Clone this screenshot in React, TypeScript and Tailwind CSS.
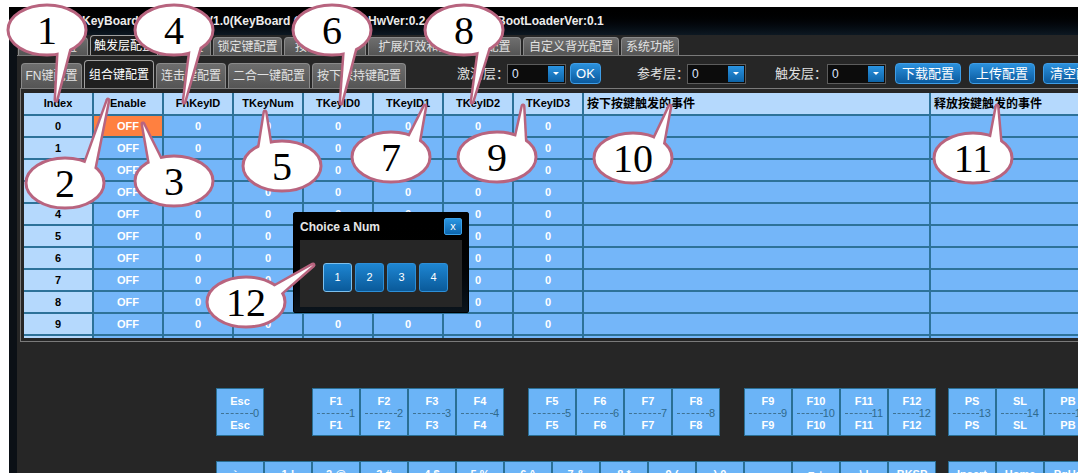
import React from "react";

type Callout = { n: string; cx: number; cy: number; a: number; tx: number; ty: number };

const RX = 39;
const RY = 25;

// a = angle (deg) on the ellipse where the tail leaves it
const callouts: Callout[] = [
  { n: "1", cx: 47, cy: 30, a: 59, tx: 56, ty: 100 },
  { n: "4", cx: 174, cy: 30, a: 50, tx: 184, ty: 102 },
  { n: "6", cx: 332, cy: 30, a: 57, tx: 341, ty: 103 },
  { n: "8", cx: 464, cy: 30, a: 53, tx: 472, ty: 102 },
  { n: "2", cx: 65, cy: 183, a: -44, tx: 108, ty: 100 },
  { n: "3", cx: 174, cy: 181, a: -123, tx: 143, ty: 124 },
  { n: "5", cx: 282, cy: 166, a: -121, tx: 265, ty: 112 },
  { n: "7", cx: 391, cy: 157, a: -48, tx: 425, ty: 106 },
  { n: "9", cx: 497, cy: 157, a: -46, tx: 523, ty: 106 },
  { n: "10", cx: 633, cy: 158, a: -42, tx: 670, ty: 106 },
  { n: "11", cx: 973, cy: 158, a: -48, tx: 997, ty: 106 },
  { n: "12", cx: 246, cy: 302, a: -29, tx: 313, ty: 265 },
];

function tail(c: Callout) {
  const pt = (deg: number) => {
    const r = (deg * Math.PI) / 180;
    return `${c.cx + RX * 0.88 * Math.cos(r)},${c.cy + RY * 0.88 * Math.sin(r)}`;
  };
  return `${pt(c.a - 11)} ${c.tx},${c.ty} ${pt(c.a + 11)}`;
}

const tabs1 = [
  { t: "按键配置", w: "w-[70px]" },
  { t: "触发层配置", w: "w-[68px]", on: true },
  { t: "宏配置", w: "w-[51px]" },
  { t: "锁定键配置", w: "w-[69px]" },
  { t: "按键宏配置", w: "w-[82px]" },
  { t: "扩展灯效和按键灯效配置", w: "w-[153px]" },
  { t: "自定义背光配置", w: "w-[96px]" },
  { t: "系统功能", w: "w-[58px]" },
];

const tabs2 = [
  { t: "FN键配置", w: "w-[61px]" },
  { t: "组合键配置", w: "w-[70px]", on: true },
  { t: "连击键配置", w: "w-[70px]" },
  { t: "二合一键配置", w: "w-[82px]" },
  { t: "按下保持键配置", w: "w-[94px]" },
];

const heads = ["Index", "Enable", "FnKeyID", "TKeyNum", "TKeyID0", "TKeyID1", "TKeyID2", "TKeyID3"];

function Combo() {
  return (
    <div className="flex h-[20px] w-[59px] shrink-0 items-center border border-[#5c5c5c] bg-[#0c0c0c]">
      <span className="flex-1 pl-[4px] text-[12px] leading-[12px] text-[#dfe6ff]">0</span>
      <span className="mr-[1px] flex h-[16px] w-[16px] items-center justify-center bg-linear-to-b from-[#2a94e2] to-[#0d64a8]">
        <span className="h-0 w-0 border-x-[3px] border-t-[3px] border-x-transparent border-t-white" />
      </span>
    </div>
  );
}

function BlueBtn({ children, className }: { children: React.ReactNode; className: string }) {
  return (
    <div
      className={`flex h-[21px] shrink-0 items-center justify-center rounded-[4px] border border-[#3f9de6] bg-linear-to-b from-[#2b91dd] to-[#0a5a9e] text-[13px] text-white ${className}`}
    >
      {children}
    </div>
  );
}

function Key({ label, n }: { label: string; n: number }) {
  return (
    <div className="flex h-[48px] w-[48px] shrink-0 flex-col border border-[#2a6f94] bg-[#6bb4f7] pt-[5px]">
      <div className="text-center text-[11px] font-bold leading-[14px] text-white">{label}</div>
      <div className="flex h-[11px] items-center pl-[4px] pr-[4px]">
        <div className="flex-1 border-t border-dashed border-[#3f7293]" />
        <span className="text-[11px] leading-[11px] text-[#2f6a8e]">{n}</span>
      </div>
      <div className="text-center text-[11px] font-bold leading-[13px] text-white">{label}</div>
    </div>
  );
}

const row2 = ["` ~", "1 !", "2 @", "3 #", "4 $", "5 %", "6 ^", "7 &", "8 *", "9 (", ") 0", "- _", "= +", "\\ |", "BKSP"];

export default function App() {
  return (
    <div className="relative h-[473px] w-[1078px] overflow-hidden bg-white pl-[9px] pt-[7px] font-['Liberation_Sans','Noto_Sans_CJK_SC',sans-serif]">
      <div className="flex h-[466px] w-[1069px] flex-col bg-[#0b1016]">
        {/* title bar */}
        <div className="flex h-[28px] shrink-0 items-center whitespace-nowrap bg-linear-to-b from-[#000000] to-[#0d1822] pl-[73px] text-[12px] font-bold text-[#ececec]">
          <span className="w-[123px] overflow-hidden">KeyBoard Config Tool</span>
          <span className="w-[163px] overflow-hidden">V1.0(KeyBoard Config)</span>
          <span className="w-[129px]">HwVer:0.2</span>
          <span>BootLoaderVer:0.1</span>
        </div>

        <div className="ml-[8px] flex flex-1 flex-col bg-[#262626]">
          {/* main tabs */}
          <div className="flex h-[21px] shrink-0 items-end gap-[2px] border-b border-[#7a7a7a] pl-[1px]">
            {tabs1.map((t) => (
              <div
                key={t.t}
                className={`flex shrink-0 items-center justify-center whitespace-nowrap rounded-t-[4px] border border-b-0 text-[12px] ${t.w} ${
                  t.on
                    ? "h-[20px] border-[#a0a0a0] bg-[#1f1f1f] text-white"
                    : "h-[18px] border-[#8a8a8a] bg-linear-to-b from-[#6e6e6e] to-[#555555] text-[#e2e2e2]"
                }`}
              >
                {t.t}
              </div>
            ))}
          </div>

          {/* sub tabs + toolbar */}
          <div className="flex h-[32px] shrink-0 items-end whitespace-nowrap pl-[4px]">
            <div className="flex items-end gap-[2px]">
              {tabs2.map((t) => (
                <div
                  key={t.t}
                  className={`flex shrink-0 items-center justify-center rounded-t-[4px] border border-b-0 text-[12px] ${t.w} ${
                    t.on
                      ? "h-[28px] border-[#a0a0a0] bg-[#1f1f1f] text-white"
                      : "h-[25px] border-[#8a8a8a] bg-linear-to-b from-[#6e6e6e] to-[#555555] text-[#e2e2e2]"
                  }`}
                >
                  {t.t}
                </div>
              ))}
            </div>
            <div className="mb-[4px] ml-[51px] flex items-center text-[13px] text-[#e0e0e0]">
              <span className="w-[50px] shrink-0">激活层：</span>
              <Combo />
              <BlueBtn className="ml-[4px] w-[31px]">OK</BlueBtn>
              <span className="ml-[36px] w-[50px] shrink-0">参考层：</span>
              <Combo />
              <span className="ml-[29px] w-[52px] shrink-0">触发层：</span>
              <Combo />
              <BlueBtn className="ml-[9px] w-[66px]">下载配置</BlueBtn>
              <BlueBtn className="ml-[8px] w-[66px]">上传配置</BlueBtn>
              <BlueBtn className="ml-[8px] w-[66px]">清空配置</BlueBtn>
            </div>
          </div>

          {/* table panel */}
          <div className="ml-[3px] shrink-0 border border-r-0 border-[#7a7a7a] pb-[3px] pl-[3px] pt-[4px]">
            <div className="h-[245px] overflow-hidden">
              <div className="grid w-[1100px] grid-cols-[68px_68px_68px_68px_68px_68px_68px_68px_345px_400px] grid-rows-[21px] auto-rows-[20px] gap-[2px] bg-[#2d7299] text-[11px] font-bold">
                {heads.map((h) => (
                  <div key={h} className="flex items-center justify-center bg-[#b5d9fd] text-black">
                    {h}
                  </div>
                ))}
                <div className="flex items-center bg-[#b5d9fd] pl-[3px] text-[12px] text-black">按下按鍵触发的事件</div>
                <div className="flex items-center bg-[#b5d9fd] pl-[3px] text-[12px] text-black">释放按鍵触发的事件</div>
                {Array.from({ length: 11 }).map((_, r) => (
                  <React.Fragment key={r}>
                    <div className="flex items-center justify-center bg-[#b5d9fd] text-black">{r}</div>
                    <div
                      className={`flex items-center justify-center text-white ${r === 0 ? "bg-[#ff8040]" : "bg-[#74b6f9]"}`}
                    >
                      OFF
                    </div>
                    {Array.from({ length: 6 }).map((__, c) => (
                      <div key={c} className="flex items-center justify-center bg-[#74b6f9] text-white">
                        0
                      </div>
                    ))}
                    <div className="bg-[#74b6f9]" />
                    <div className="bg-[#74b6f9]" />
                  </React.Fragment>
                ))}
              </div>
            </div>
          </div>

          {/* keyboard */}
          <div className="pl-[199px] pt-[46px]">
            <div className="flex">
              <Key label="Esc" n={0} />
              <div className="w-[48px] shrink-0" />
              {["F1", "F2", "F3", "F4"].map((k, i) => (
                <Key key={k} label={k} n={i + 1} />
              ))}
              <div className="w-[24px] shrink-0" />
              {["F5", "F6", "F7", "F8"].map((k, i) => (
                <Key key={k} label={k} n={i + 5} />
              ))}
              <div className="w-[24px] shrink-0" />
              {["F9", "F10", "F11", "F12"].map((k, i) => (
                <Key key={k} label={k} n={i + 9} />
              ))}
              <div className="w-[12px] shrink-0" />
              {["PS", "SL", "PB"].map((k, i) => (
                <Key key={k} label={k} n={i + 13} />
              ))}
            </div>
            <div className="mt-[25px] flex">
              {row2.map((k, i) => (
                <Key key={k} label={k} n={i + 16} />
              ))}
              <div className="w-[12px] shrink-0" />
              {["Insert", "Home", "PgUp"].map((k, i) => (
                <Key key={k} label={k} n={i + 31} />
              ))}
            </div>
          </div>
        </div>
      </div>

      {/* popup */}
      <div className="absolute left-[293px] top-[212px] h-[101px] w-[176px] rounded-[2px] border border-black bg-linear-to-b from-[#000000] to-[#0b141c]">
        <div className="flex h-[27px] items-center justify-between pl-[6px] pr-[6px]">
          <span className="text-[12px] font-bold text-[#e6e6e6]">Choice a Num</span>
          <span className="flex h-[17px] w-[18px] items-center justify-center rounded-[2px] border border-[#3aa0e8] bg-linear-to-b from-[#2a96e2] to-[#0c66ad] text-[11px] leading-[11px] text-white">
            x
          </span>
        </div>
        <div className="ml-[6px] flex h-[67px] w-[162px] gap-[3px] bg-[#262626] pl-[23px] pt-[23px]">
          {["1", "2", "3", "4"].map((b) => (
            <div
              key={b}
              className={`flex h-[29px] w-[29px] items-center justify-center rounded-[3px] border bg-linear-to-b from-[#1e86d2] to-[#0a5a9a] text-[11px] text-white ${
                b === "1" ? "border-[#7cc0ee]" : "border-[#2d8fd8]"
              }`}
            >
              {b}
            </div>
          ))}
        </div>
      </div>

      {/* numbered callouts */}
      <svg className="pointer-events-none absolute left-0 top-0" width={1078} height={473}>
        {callouts.map((c) => (
          <g key={c.n}>
            <polygon points={tail(c)} fill="#fff" stroke="#b8647f" strokeWidth={5} strokeLinejoin="round" />
            <ellipse cx={c.cx} cy={c.cy} rx={RX} ry={RY} fill="#fff" stroke="#b8647f" strokeWidth={3} />
            <polygon points={tail(c)} fill="#fff" />
            <text
              x={c.cx}
              y={c.cy + 14}
              textAnchor="middle"
              fontFamily="'Liberation Serif', serif"
              fontSize={40}
              fill="#000"
            >
              {c.n}
            </text>
          </g>
        ))}
      </svg>
    </div>
  );
}
